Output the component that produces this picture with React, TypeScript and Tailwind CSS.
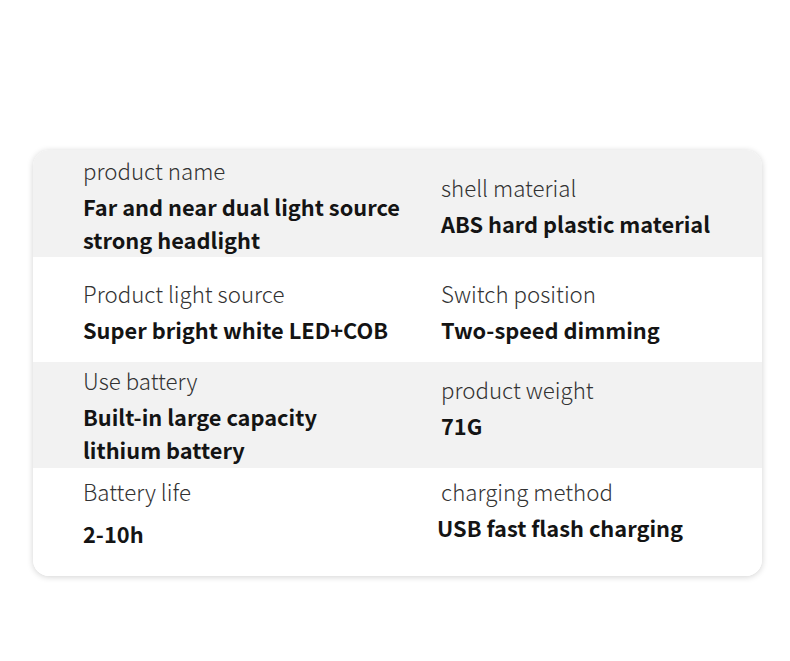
import React from "react";

// ─── data ─────────────────────────────────────────────────────────────────────

type Spec = { label: string; value: string[]; gap?: string; x?: string; shift?: string };
type Row = { bg: string; h: string; left: Spec; right: Spec; pb?: string };

const ROWS: Row[] = [
  {
    bg: "bg-[#f2f2f2]",
    h: "h-[107px]",
    left: { label: "product name", value: ["Far and near dual light source", "strong headlight"], shift: "mt-[3px]" },
    right: { label: "shell material", value: ["ABS hard plastic material"], shift: "mt-[3px]" },
  },
  {
    bg: "bg-white",
    h: "h-[105px]",
    left: { label: "Product light source", value: ["Super bright white LED+COB"], shift: "mt-[4px]" },
    right: { label: "Switch position", value: ["Two-speed dimming"], shift: "mt-[4px]" },
  },
  {
    bg: "bg-[#f2f2f2]",
    h: "h-[106px]",
    left: { label: "Use battery", value: ["Built-in large capacity", "lithium battery"] },
    right: { label: "product weight", value: ["71G"], shift: "mb-[16px]" },
  },
  {
    bg: "bg-white",
    h: "h-[108px]",
    pb: "pb-[20px]",
    left: { label: "Battery life", value: ["2-10h"], gap: "mt-[6px]" },
    right: { label: "charging method", value: ["USB fast flash charging"], x: "-ml-[4px]", shift: "mb-[5px]" },
  },
];

// ─── component ────────────────────────────────────────────────────────────────

function Cell({ spec }: { spec: Spec }) {
  return (
    <div className={`flex flex-col justify-center ${spec.shift ?? ""}`}>
      <p className="text-[22.3px] leading-[33px] font-light text-[#333333] mb-[3px]">
        {spec.label}
      </p>
      <div className={`${spec.gap ?? ""} ${spec.x ?? ""}`}>
        {spec.value.map((line) => (
          <p key={line} className="text-[21.8px] leading-[33px] font-bold text-[#141414]">
            {line}
          </p>
        ))}
      </div>
    </div>
  );
}

export default function App() {
  return (
    <div
      className="min-h-[661px] w-[790px] bg-white pt-[150px] pl-[33px]"
      style={{ fontFamily: '"Noto Sans CJK SC", "Noto Sans", sans-serif' }}
    >
      <div className="w-[729px] overflow-hidden rounded-[16px] bg-white shadow-[0_1px_6px_rgba(0,0,0,0.18)]">
        {ROWS.map((row, i) => (
          <div key={i} className={`${row.bg} ${row.h} ${row.pb ?? ""} grid grid-cols-[358px_1fr] pl-[50px] items-center`}>
            <Cell spec={row.left} />
            <Cell spec={row.right} />
          </div>
        ))}
      </div>
    </div>
  );
}
